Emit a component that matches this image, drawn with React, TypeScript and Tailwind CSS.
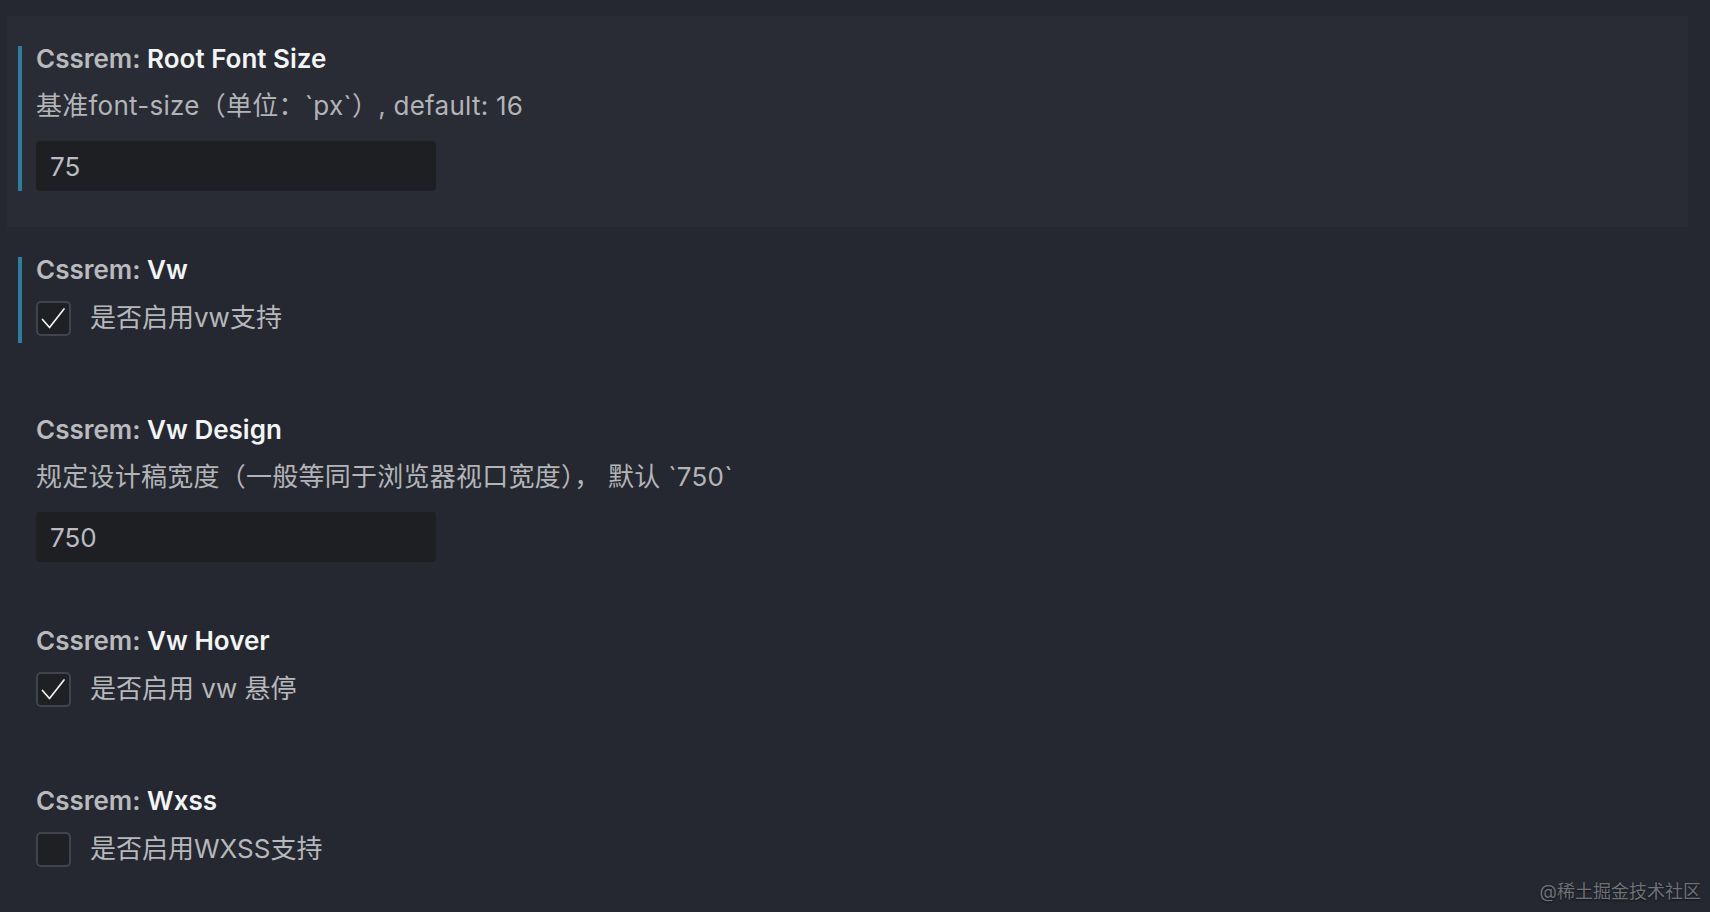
import React from "react";

const FONT = { fontFamily: '"Inter", "Noto Sans CJK SC", sans-serif' };

function Title({ name }: { name: string }) {
  return (
    <div className="h-[26px] leading-[26px] text-[26px] font-semibold whitespace-nowrap">
      <span className="text-[#b9babd]">Cssrem: </span>
      <span className="text-[#f3f4f6]">{name}</span>
    </div>
  );
}

function Check({ checked }: { checked: boolean }) {
  return (
    <div className="w-[35px] h-[35px] shrink-0 rounded-[5px] border-2 border-[#41444d] bg-[#1f2024] flex items-center justify-center">
      {checked && (
        <svg width="31" height="31" viewBox="0 0 31 31" fill="none">
          <path d="M4.5 16.5 L11.5 24.5 L26 6" stroke="#f2f2f2" strokeWidth="1.7" strokeLinecap="round" strokeLinejoin="round" />
        </svg>
      )}
    </div>
  );
}

function InputItem({ name, desc, value, focused, modified }: { name: string; desc: string; value: string; focused?: boolean; modified?: boolean }) {
  return (
    <div className={`h-[211px] pt-[30px] ${focused ? "bg-[#292c35]" : ""}`}>
      <div className={`ml-[11px] border-l-[4px] pl-[14px] ${modified ? "border-[#2f7c9c]" : "border-transparent"}`}>
        <Title name={name} />
        <div className="mt-[21px] h-[26px] leading-[26px] text-[26px] tracking-[0.25px] text-[#b3b4b7] whitespace-nowrap">{desc}</div>
        <div className="mt-[22px] w-[400px] h-[50px] rounded-[4px] bg-[#1e1f23] flex items-center pl-[14px] text-[26px] text-[#b9bcc4]">
          {value}
        </div>
      </div>
    </div>
  );
}

function CheckItem({ name, label, checked, modified }: { name: string; label: string; checked: boolean; modified?: boolean }) {
  return (
    <div className="h-[160px] pt-[30px]">
      <div className={`ml-[11px] border-l-[4px] pl-[14px] ${modified ? "border-[#2f7c9c]" : "border-transparent"}`}>
        <Title name={name} />
        <div className="mt-[18px] h-[42px] flex items-start gap-[19px]">
          <Check checked={checked} />
          <div className="h-[33px] leading-[33px] text-[26px] text-[#b7b8bb] whitespace-nowrap">{label}</div>
        </div>
      </div>
    </div>
  );
}

export default function App() {
  return (
    <div className="relative w-[1710px] h-[912px] overflow-hidden bg-[#252830]" style={FONT}>
      <div className="pt-[16px] pl-[7px] pr-[22px]">
        <InputItem name="Root Font Size" desc="基准font-size（单位：`px`）, default: 16" value="75" focused modified />
        <CheckItem name="Vw" label="是否启用vw支持" checked modified />
        <InputItem name="Vw Design" desc="规定设计稿宽度（一般等同于浏览器视口宽度）， 默认 `750`" value="750" />
        <CheckItem name="Vw Hover" label="是否启用 vw 悬停" checked />
        <CheckItem name="Wxss" label="是否启用WXSS支持" checked={false} />
      </div>
      <div className="absolute right-[9px] bottom-[10px] text-[18px] leading-[20px] text-[#6e7178] [text-shadow:0_1px_2px_rgba(0,0,0,0.6)] whitespace-nowrap">
        @稀土掘金技术社区
      </div>
    </div>
  );
}
